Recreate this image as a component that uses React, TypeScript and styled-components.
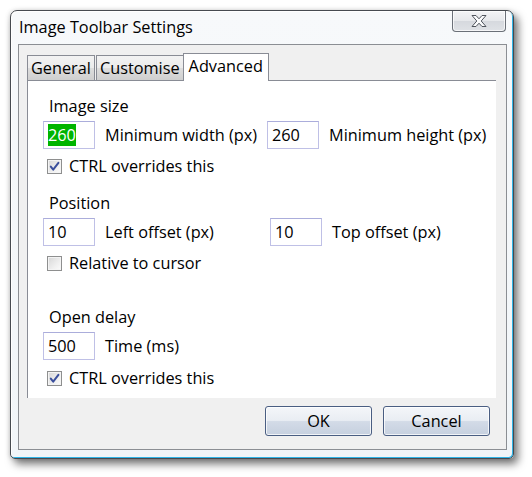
import React from 'react';
import styled, { createGlobalStyle } from 'styled-components';

const Global = createGlobalStyle`
  html, body { margin: 0; padding: 0; background: #ffffff; }
  body {
    font-family: "Open Sans", "Noto Sans", sans-serif;
    font-size: 16.3px;
    color: #000;
  }
  * { box-sizing: border-box; }
`;

const Page = styled.div`
  width: 532px;
  height: 477px;
  padding: 10px 0 0 10px;
`;

const Window = styled.div`
  width: 504px;
  height: 449px;
  border: 1px solid #464a50;
  border-radius: 7px 7px 5px 5px;
  background: linear-gradient(180deg, #f7f9fb 0%, #f1f5f8 100%);
  box-shadow: inset -1px -1px 0 #2fb4e6, inset 1px 1px 0 #ffffff,
    4px 5px 9px rgba(0, 0, 0, 0.55), -1px 0 4px rgba(0, 0, 0, 0.12);
  display: flex;
  flex-direction: column;
  padding: 0 6px 8px 7px;
`;

const TitleBar = styled.div`
  height: 33px;
  display: flex;
  justify-content: space-between;
  align-items: flex-start;
`;

const Title = styled.div`
  margin-top: 5px;
  padding-left: 1px;
  line-height: 22px;
  white-space: nowrap;
`;

const CloseButton = styled.div`
  width: 54px;
  height: 21px;
  margin-right: 1px;
  border: 1px solid #6b7078;
  border-top: none;
  border-radius: 0 0 4px 4px;
  background: linear-gradient(180deg, #f3f4f6 0%, #e6e8eb 50%, #d6d9de 52%, #dfe2e6 100%);
  box-shadow: inset 0 0 0 1px rgba(255, 255, 255, 0.7);
  display: flex;
  align-items: center;
  justify-content: center;
`;

const Client = styled.div`
  flex: 1;
  border: 1px solid #8b8e93;
  background: #f0f0f0;
  display: flex;
  flex-direction: column;
  padding: 8px 10px 13px 8px;
`;

const TabStrip = styled.div`
  height: 27px;
  display: flex;
  align-items: flex-start;
`;

const Tab = styled.div<{ $active?: boolean }>`
  position: relative;
  z-index: ${(p) => (p.$active ? 1 : 0)};
  margin-top: ${(p) => (p.$active ? '0' : '2px')};
  margin-left: ${(p) => (p.$active ? '-1px' : '1px')};
  height: ${(p) => (p.$active ? '28px' : '25px')};
  padding: 1px ${(p) => (p.$active ? '5px' : '3px')} 0;
  line-height: 22px;
  white-space: nowrap;
  border: 1px solid #898c95;
  border-bottom: none;
  background: ${(p) =>
    p.$active ? '#ffffff' : 'linear-gradient(180deg, #f3f3f3 0%, #ebebeb 50%, #dddddd 52%, #cfcfcf 100%)'};
  &:first-child { margin-left: 0; }
`;

const Panel = styled.div`
  height: 318px;
  background: #ffffff;
  border-top: 1px solid #898c95;
  border-left: 1px solid #898c95;
  padding: 14px 0 0 15px;
  display: flex;
  flex-direction: column;
`;

const Section = styled.div<{ $top: number }>`
  margin-top: ${(p) => p.$top}px;
  display: flex;
  flex-direction: column;
`;

const SectionLabel = styled.div`
  line-height: 22px;
  padding-left: 6px;
`;

const FieldRow = styled.div`
  margin-top: 4px;
  display: flex;
  align-items: center;
`;

const Field = styled.div<{ $width?: number }>`
  display: flex;
  align-items: center;
  gap: 10px;
  width: ${(p) => (p.$width ? `${p.$width}px` : 'auto')};
  flex: none;
`;

const TextBox = styled.div`
  width: 52px;
  height: 28px;
  border: 1px solid #bfc0e6;
  border-top-color: #abaddb;
  background: #ffffff;
  padding: 2px 4px 0;
  line-height: 22px;
`;

const Highlight = styled.span`
  display: inline-block;
  background: #00b400;
  color: #ffffff;
  line-height: 22px;
`;

const FieldLabel = styled.span`
  line-height: 22px;
  white-space: nowrap;
`;

const CheckRow = styled.div<{ $top: number }>`
  margin-top: ${(p) => p.$top}px;
  padding-left: 4px;
  display: flex;
  align-items: center;
  gap: 7px;
  line-height: 22px;
`;

const CheckBox = styled.div`
  width: 15px;
  height: 15px;
  border: 1px solid #8e8f8f;
  background: linear-gradient(135deg, #d6d6d6 0%, #efefef 60%, #fbfbfb 100%);
  box-shadow: inset 0 0 0 1px #f4f4f4;
  display: flex;
  align-items: center;
  justify-content: center;
`;

const ButtonRow = styled.div`
  margin-top: 8px;
  padding-right: 6px;
  display: flex;
  justify-content: flex-end;
  gap: 11px;
`;

const Button = styled.div`
  width: 107px;
  height: 30px;
  border: 1px solid #4a5e82;
  border-radius: 3px;
  background: linear-gradient(180deg, #f4f6f9 0%, #e9edf3 48%, #d3dbe7 52%, #c6d0df 100%);
  box-shadow: inset 0 0 0 1px rgba(255, 255, 255, 0.75);
  display: flex;
  align-items: center;
  justify-content: center;
  line-height: 22px;
`;

const CloseIcon = () => (
  <svg width="16" height="14" viewBox="0 0 16 14">
    <polygon
      points="1,1.5 5,1.5 8,4.8 11,1.5 15,1.5 10.2,7 15,12.5 11,12.5 8,9.2 5,12.5 1,12.5 5.8,7"
      fill="#fbfcfd"
      stroke="#50555d"
      strokeWidth="1"
      strokeLinejoin="round"
    />
  </svg>
);

const CheckMark = () => (
  <svg width="11" height="11" viewBox="0 0 11 11">
    <path d="M1.8 5.6 L4.2 8.6 L9.4 1.8" fill="none" stroke="#3a4f9c" strokeWidth="2" strokeLinecap="round" strokeLinejoin="round" />
  </svg>
);

const Check = ({ checked, label, top }: { checked: boolean; label: string; top: number }) => (
  <CheckRow $top={top}>
    <CheckBox>{checked && <CheckMark />}</CheckBox>
    <span>{label}</span>
  </CheckRow>
);

export default function App() {
  return (
    <Page>
      <Global />
      <Window>
        <TitleBar>
          <Title>Image Toolbar Settings</Title>
          <CloseButton>
            <CloseIcon />
          </CloseButton>
        </TitleBar>
        <Client>
          <TabStrip>
            <Tab>General</Tab>
            <Tab>Customise</Tab>
            <Tab $active>Advanced</Tab>
          </TabStrip>
          <Panel>
            <Section $top={0}>
              <SectionLabel>Image size</SectionLabel>
              <FieldRow>
                <Field $width={224}>
                  <TextBox>
                    <Highlight>260</Highlight>
                  </TextBox>
                  <FieldLabel>Minimum width (px)</FieldLabel>
                </Field>
                <Field>
                  <TextBox>260</TextBox>
                  <FieldLabel>Minimum height (px)</FieldLabel>
                </Field>
              </FieldRow>
              <Check checked label="CTRL overrides this" top={6} />
            </Section>
            <Section $top={15}>
              <SectionLabel>Position</SectionLabel>
              <FieldRow>
                <Field $width={227}>
                  <TextBox>10</TextBox>
                  <FieldLabel>Left offset (px)</FieldLabel>
                </Field>
                <Field>
                  <TextBox>10</TextBox>
                  <FieldLabel>Top offset (px)</FieldLabel>
                </Field>
              </FieldRow>
              <Check checked={false} label="Relative to cursor" top={6} />
            </Section>
            <Section $top={32}>
              <SectionLabel>Open delay</SectionLabel>
              <FieldRow>
                <Field>
                  <TextBox>500</TextBox>
                  <FieldLabel>Time (ms)</FieldLabel>
                </Field>
              </FieldRow>
              <Check checked label="CTRL overrides this" top={7} />
            </Section>
          </Panel>
          <ButtonRow>
            <Button>OK</Button>
            <Button>Cancel</Button>
          </ButtonRow>
        </Client>
      </Window>
    </Page>
  );
}
